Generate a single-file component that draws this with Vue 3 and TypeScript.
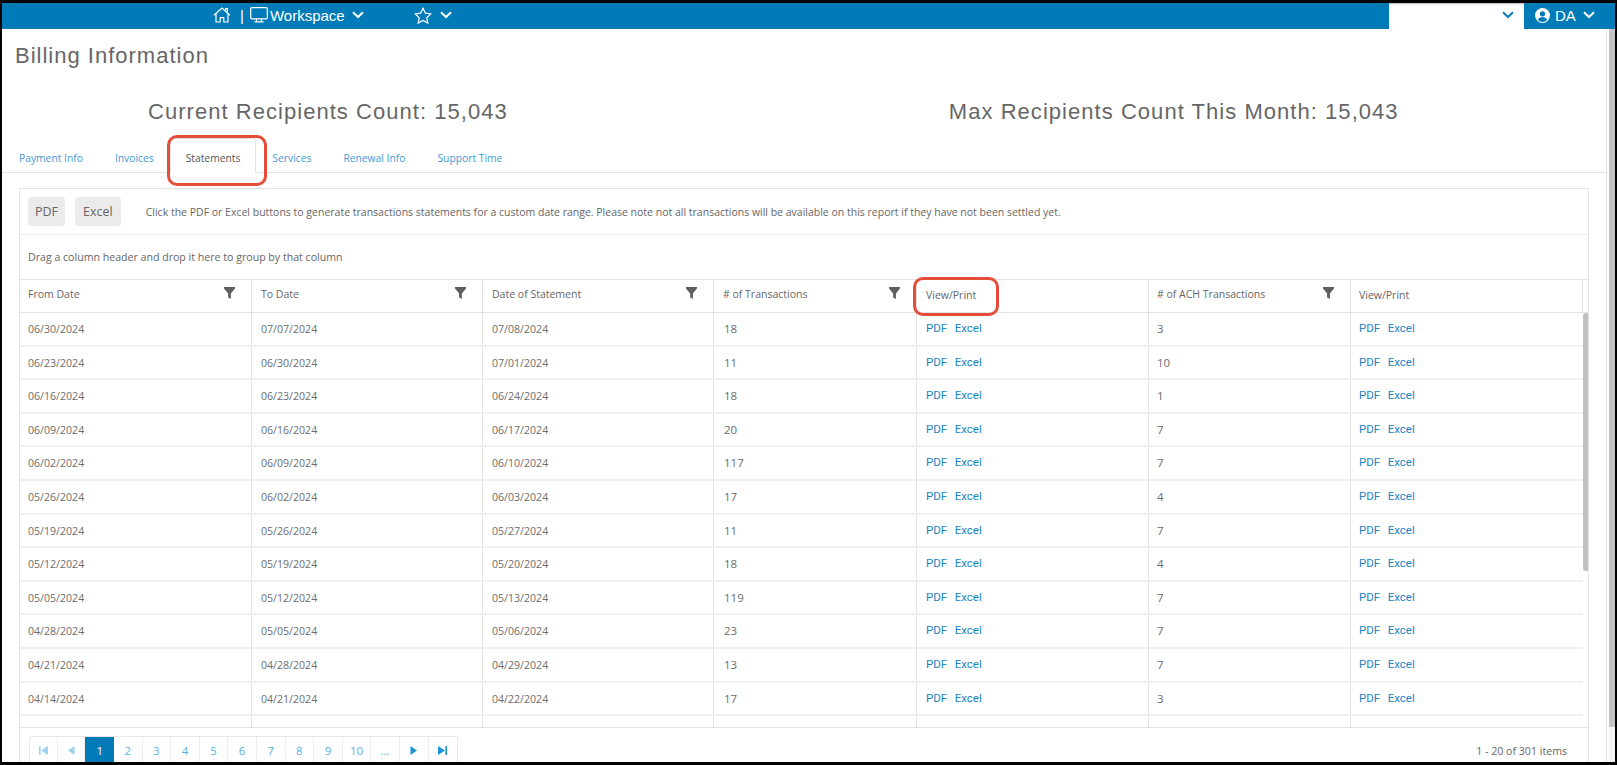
<script setup lang="ts">
interface Row { from: string; to: string; stmt: string; tx: string; ach: string }
const raw: string[][] = [
  ['06/30/2024','07/07/2024','07/08/2024','18','3'],
  ['06/23/2024','06/30/2024','07/01/2024','11','10'],
  ['06/16/2024','06/23/2024','06/24/2024','18','1'],
  ['06/09/2024','06/16/2024','06/17/2024','20','7'],
  ['06/02/2024','06/09/2024','06/10/2024','117','7'],
  ['05/26/2024','06/02/2024','06/03/2024','17','4'],
  ['05/19/2024','05/26/2024','05/27/2024','11','7'],
  ['05/12/2024','05/19/2024','05/20/2024','18','4'],
  ['05/05/2024','05/12/2024','05/13/2024','119','7'],
  ['04/28/2024','05/05/2024','05/06/2024','23','7'],
  ['04/21/2024','04/28/2024','04/29/2024','13','7'],
  ['04/14/2024','04/21/2024','04/22/2024','17','3'],
  ['','','','',''],
]
const rows: Row[] = raw.map(r => ({ from: r[0], to: r[1], stmt: r[2], tx: r[3], ach: r[4] }))
const tabs = ['Payment Info', 'Invoices', 'Statements', 'Services', 'Renewal Info', 'Support Time']
const pages = ['1','2','3','4','5','6','7','8','9','10','...']
const funnel = 'M0 0H11V1.6L6.9 6.4V12L4.1 10.4V6.4L0 1.6Z'
</script>

<template>
  <div class="screen">
    <header class="topbar">
      <div class="nav">
        <svg class="ic home" viewBox="0 0 18 16" fill="none" stroke="#fff" stroke-width="1.2"><path d="M1 8.2 9 1l8 7.2M3 6.6V15h4.2v-4.400h3.600V15H15V6.600M12.600 3.200V1.600h1.800v3.200"/></svg>
        <span class="sep">|</span>
        <svg class="ic mon" viewBox="0 0 18 16" fill="none" stroke="#fff" stroke-width="1.2"><rect x="0.7" y="0.7" width="16.6" height="11.2" rx="1.2"/><path d="M6.5 12v2.6M11.5 12v2.6M4.5 14.9h9"/></svg>
        <span class="ws">Workspace</span>
        <svg class="chev" viewBox="0 0 12 8" fill="none" stroke="#fff" stroke-width="2"><path d="M1 1.2 6 6l5-4.8"/></svg>
        <svg class="ic star" viewBox="0 0 18 17" fill="none" stroke="#fff" stroke-width="1.2"><path d="M9 1.2l2.4 5 5.4.7-4 3.8 1 5.4L9 13.500l-4.800 2.600 1-5.400-4-3.800 5.400-.7z"/></svg>
        <svg class="chev c2" viewBox="0 0 12 8" fill="none" stroke="#fff" stroke-width="2"><path d="M1 1.2 6 6l5-4.8"/></svg>
      </div>
      <div class="search">
        <svg class="chev" viewBox="0 0 12 8" fill="none" stroke="#0b7cba" stroke-width="2"><path d="M1 1.2 6 6l5-4.8"/></svg>
      </div>
      <div class="user">
        <svg class="ic uic" viewBox="0 0 16 16"><circle cx="8" cy="8" r="8" fill="#fff"/><circle cx="8" cy="6.200" r="2.800" fill="#007bb8"/><path d="M3 12.800c1-2.300 3-3.100 5-3.100s4 .8 5 3.100A7 7 0 0 1 8 15a7 7 0 0 1-5-2.200z" fill="#007bb8"/></svg>
        <span class="da">DA</span>
        <svg class="chev" viewBox="0 0 12 8" fill="none" stroke="#fff" stroke-width="2"><path d="M1 1.2 6 6l5-4.8"/></svg>
      </div>
    </header>

    <div class="page">
      <main class="content">
        <h1 class="title">Billing Information</h1>
        <div class="counts">
          <div class="count">Current Recipients Count: 15,043</div>
          <div class="count">Max Recipients Count This Month: 15,043</div>
        </div>
        <nav class="tabs">
          <a v-for="t in tabs" :key="t" class="tab" :class="{ active: t === 'Statements' }">{{ t }}</a>
        </nav>

        <section class="panel">
          <div class="toolbar">
            <button class="btn">PDF</button>
            <button class="btn">Excel</button>
            <span class="hint">Click the PDF or Excel buttons to generate transactions statements for a custom date range. Please note not all transactions will be available on this report if they have not been settled yet.</span>
          </div>
          <div class="group">Drag a column header and drop it here to group by that column</div>
          <div class="head cols">
            <div class="th">From Date<svg class="fn" viewBox="0 0 11 12"><path :d="funnel"/></svg></div>
            <div class="th">To Date<svg class="fn" viewBox="0 0 11 12"><path :d="funnel"/></svg></div>
            <div class="th">Date of Statement<svg class="fn" viewBox="0 0 11 12"><path :d="funnel"/></svg></div>
            <div class="th"># of Transactions<svg class="fn" viewBox="0 0 11 12"><path :d="funnel"/></svg></div>
            <div class="th vp">View/Print</div>
            <div class="th"># of ACH Transactions<svg class="fn" viewBox="0 0 11 12"><path :d="funnel"/></svg></div>
            <div class="th vp">View/Print</div>
          </div>
          <div class="bodywrap">
            <div class="body">
              <div v-for="(r, i) in rows" :key="i" class="tr cols">
                <div class="td">{{ r.from }}</div>
                <div class="td">{{ r.to }}</div>
                <div class="td">{{ r.stmt }}</div>
                <div class="td num">{{ r.tx }}</div>
                <div class="td links"><a>PDF</a><a>Excel</a></div>
                <div class="td num">{{ r.ach }}</div>
                <div class="td links"><a>PDF</a><a>Excel</a></div>
              </div>
            </div>
            <div class="track"><div class="thumb"></div></div>
          </div>
          <div class="pager">
            <div class="pages">
              <span class="pg nav-pg"><svg class="pi" viewBox="0 0 9 9"><path d="M0 0h1.600v9H0zM9 0v9L2 4.500z" fill="#9dd3ef"/></svg></span>
              <span class="pg nav-pg"><svg class="pi" viewBox="0 0 9 9"><path d="M7.500 0v9L1 4.500z" fill="#9dd3ef"/></svg></span>
              <span v-for="p in pages" :key="p" class="pg" :class="{ cur: p === '1' }">{{ p }}</span>
              <span class="pg"><svg class="pi" viewBox="0 0 9 9"><path d="M1.500 0v9L8 4.500z" fill="#1c94d4"/></svg></span>
              <span class="pg"><svg class="pi" viewBox="0 0 9 9"><path d="M0 0v9l7-4.500zM7.400 0H9v9H7.400z" fill="#1c94d4"/></svg></span>
            </div>
            <span class="info">1 - 20 of 301 items</span>
          </div>
        </section>
      </main>
      <div class="vscroll"><div class="vthumb"></div></div>
    </div>

    <div class="mark m1"></div>
    <div class="mark m2"></div>
  </div>
</template>

<style>
html, body { margin: 0; background: #fff; overflow: hidden; }
</style>

<style scoped>
.screen {
  width: 1617px;
  height: 765px;
  box-sizing: border-box;
  position: relative;
  overflow: hidden;
  background: #fff;
  border-style: solid;
  border-color: #000;
  border-width: 3px 2px 3px 2px;
  display: flex;
  flex-direction: column;
  font-family: "Open Sans", "Liberation Sans", sans-serif;
  color: #666;
}
.topbar {
  height: 26px;
  flex: none;
  display: flex;
  background: #007bb8;
  color: #fff;
  font-family: "Liberation Sans", sans-serif;
}
.nav { width: 1387px; flex: none; display: flex; align-items: center; padding: 0 0 2px 211px; box-sizing: border-box; }
.ic { display: block; flex: none; }
.home { width: 18px; height: 16px; }
.sep { margin: 0 6px 0 9px; font-size: 15px; }
.mon { width: 18px; height: 16px; }
.ws { margin-left: 2px; font-size: 15px; }
.chev { width: 12px; height: 8px; flex: none; display: block; }
.nav > .chev { margin-left: 7px; }
.star { width: 18px; height: 17px; margin-left: 50px; }
.nav > .c2 { margin-left: 8px; }
.search { width: 135px; flex: none; background: #fff; display: flex; align-items: center; justify-content: flex-end; padding: 0 10px 2px 0; box-sizing: border-box; box-shadow: inset 0 2px 2px -1px #b5b5b5; }
.user { flex: 1; display: flex; align-items: center; padding: 0 0 2px 11px; }
.uic { width: 15px; height: 15px; }
.da { margin: 0 7px 0 5px; font-size: 15px; }
.page { flex: 1; min-height: 0; display: flex; justify-content: space-between; }
.content { width: 1605px; flex: none; box-sizing: border-box; display: flex; flex-direction: column; border-right: 1px solid #e3e3e3; }
.vscroll { width: 6px; flex: none; background: #f6f6f6; }
.vthumb { height: 698px; background: #c4c4c4; }
.title { margin: 0; padding: 14px 0 0 13px; font-size: 22px; line-height: 26px; font-weight: 400; letter-spacing: 1px; font-family: "Liberation Sans", sans-serif; color: #666; }
.counts { display: flex; gap: 441px; margin-top: 28px; height: 30px; padding-left: 146px; }
.count { font-size: 22px; line-height: 30px; letter-spacing: 1.040px; font-family: "Liberation Sans", sans-serif; color: #666; white-space: nowrap; }
.tabs { display: flex; margin-top: 11px; height: 35px; box-sizing: border-box; border-bottom: 1px solid #e3e3e3; padding-left: 1px; }
.tab { font-size: 10.300px; line-height: 16px; padding: 12px 16px 0; color: #3f9bd6; white-space: nowrap; }
.tab.active { color: #555; background: #fff; border: 1px solid #e3e3e3; border-bottom: 0; border-radius: 3px 3px 0 0; height: 35px; padding: 11px 15px 0; box-sizing: border-box; margin-bottom: -1px; }
.panel { margin: 15px 0 0 17px; width: 1570px; box-sizing: border-box; flex: 1; min-height: 0; border: 1px solid #e3e3e3; border-bottom: 0; display: flex; flex-direction: column; overflow: hidden; }
.toolbar { height: 46px; flex: none; box-sizing: border-box; display: flex; align-items: center; padding: 0 8px; border-bottom: 1px solid #ececec; }
.btn { height: 29px; border: 0; border-radius: 3px; background: #ebebeb; color: #666; font-family: inherit; font-size: 12.500px; padding: 0 7px; margin-right: 10px; }
.btn + .btn { padding: 0 8px; }
.hint { margin-left: 15px; font-size: 10.500px; white-space: nowrap; color: #666; }
.group { height: 45px; flex: none; box-sizing: border-box; display: flex; align-items: center; padding: 0 8px; font-size: 10.600px; border-bottom: 1px solid #e3e3e3; }
.cols { display: grid; grid-template-columns: 232px 231px 231px 203px 232px 202px 232px; }
.head { height: 33px; flex: none; box-sizing: border-box; border-bottom: 1px solid #e3e3e3; }
.th { position: relative; box-sizing: border-box; padding: 6px 8px 0; font-size: 10.500px; line-height: 16px; border-right: 1px solid #e3e3e3; color: #666; white-space: nowrap; }
.th.vp { padding-top: 7px; font-size: 10.500px; }
.th:nth-child(2), .th:nth-child(3), .th:nth-child(4), .th:nth-child(5) { padding-left: 9px; }
.fn { position: absolute; right: 16px; top: 7px; width: 11px; height: 12px; fill: #5f5f5f; }
.bodywrap { flex: 1; min-height: 0; display: flex; overflow: hidden; border-bottom: 1px solid #e3e3e3; }
.body { width: 1563px; flex: none; overflow: hidden; }
.tr { height: 33.600px; box-sizing: border-box; border-bottom: 2px solid #f0f0f0; }
.td { box-sizing: border-box; padding: 8px 8px 0; font-size: 10.600px; line-height: 16px; border-right: 1px solid #e3e3e3; white-space: nowrap; color: #6c6c6c; }
.td:last-child { border-right: 0; }
.td:nth-child(2), .td:nth-child(3), .td:nth-child(5) { padding-left: 9px; }
.td.num { font-size: 11.500px; padding-top: 8px; }
.td:nth-child(4) { padding-left: 10px; }
.td.links { padding-top: 7px; display: flex; gap: 7.500px; }
.td.links a { color: #1a85c4; font-size: 11.500px; font-family: Roboto, "Open Sans", sans-serif; }
.track { flex: 1; background: #fff; }
.thumb { height: 258px; width: 6px; background: #c2c2c2; border-radius: 3px; }
.pager { height: 34px; flex: none; display: flex; align-items: flex-start; justify-content: space-between; padding: 8px 8px 0 9px; box-sizing: border-box; }
.pages { display: flex; border: 1px solid #e8e8e8; border-bottom: 0; border-radius: 3px 3px 0 0; height: 30px; }
.pg { width: 28.600px; height: 30px; box-sizing: border-box; border-right: 1px solid #eeeeee; font-size: 11.500px; color: #59b2e2; display: flex; align-items: center; justify-content: center; padding-bottom: 3px; }
.pg.nav-pg { width: 27.700px; }
.pg:last-child { border-right: 0; }
.pg.cur { background: #007bb8; color: #fff; border-right: 0; }
.pi { width: 9px; height: 9px; display: block; }
.info { font-size: 10.600px; line-height: 16px; margin: 7px 13px 0 0; color: #666; }
.mark { position: absolute; box-sizing: border-box; border: 3px solid #e54c39; border-radius: 10px; background: transparent; pointer-events: none; }
.m1 { left: 165px; top: 132px; width: 100px; height: 51px; }
.m2 { left: 911px; top: 274px; width: 86px; height: 39px; }
</style>
